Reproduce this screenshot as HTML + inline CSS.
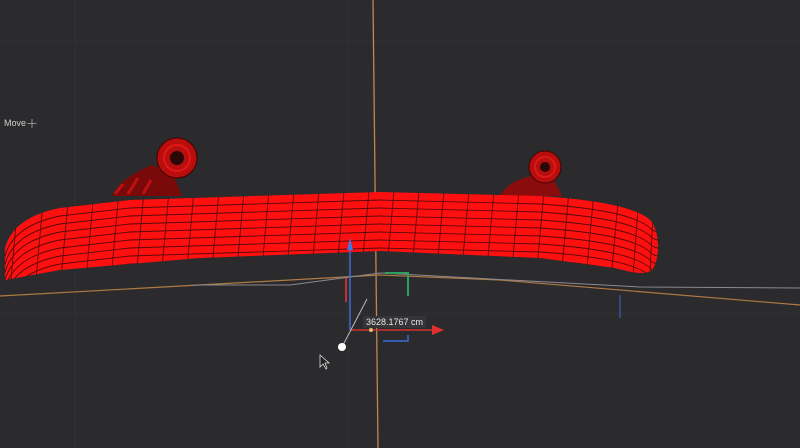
<!DOCTYPE html>
<html><head><style>
html,body{margin:0;padding:0;background:#2b2a2c;width:800px;height:448px;overflow:hidden;font-family:"Liberation Sans",sans-serif}
svg{position:absolute;left:0;top:0}
.lbl{position:absolute;left:4px;top:118px;font-size:9px;color:#cfcfcf}
.meas{position:absolute;left:363px;top:316px;font-size:9px;color:#e8e8e8;background:#353436;padding:1px 3px}
</style></head><body>
<svg width="800" height="448" viewBox="0 0 800 448">
<defs>
<clipPath id="b"><path d="M5,248 C10,230 25,215 60,208 L130,200 L380,192 L540,196 C600,200 640,208 652,222 C660,235 660,260 652,270 C645,276 630,272 615,268 L540,258 L380,251 L200,258 L60,270 L5,280 Z"/></clipPath>
<path id="row" d="M0,250 L5,248 C10,230 25,215 60,208 L130,200 L380,192 L540,196 C600,200 640,208 652,222 L700,240"/>
</defs>
<g stroke="#323133" stroke-width="1">
<line x1="75" y1="0" x2="75" y2="448"/><line x1="0" y1="42" x2="800" y2="42"/>
<line x1="348" y1="0" x2="348" y2="448"/><line x1="0" y1="314" x2="800" y2="314"/>
</g>
<line x1="373" y1="0" x2="378" y2="448" stroke="#c08850" stroke-width="1.3"/>
<!-- wheels -->
<path d="M112,196 C118,182 135,172 152,165 L172,172 L182,196 Z" fill="#7a0a0a"/>
<path d="M115,194 l8,-10 m5,10 l10,-16 m5,16 l8,-14" stroke="#c01010" stroke-width="3" fill="none"/>
<circle cx="177" cy="158" r="20" fill="#b80e0e" stroke="#400" stroke-width="1"/>
<circle cx="177" cy="158" r="13" fill="none" stroke="#e01818" stroke-width="2"/>
<circle cx="177" cy="158" r="7" fill="#2a0808"/>
<path d="M500,196 C505,185 520,178 532,176 L555,182 L562,196 Z" fill="#8a0c0c"/>
<circle cx="545" cy="167" r="16" fill="#b80e0e" stroke="#400" stroke-width="1"/>
<circle cx="545" cy="167" r="10" fill="none" stroke="#e01818" stroke-width="2"/>
<circle cx="545" cy="167" r="5" fill="#2a0808"/>
<!-- board -->
<g clip-path="url(#b)">
<rect x="0" y="180" width="700" height="110" fill="#ff1010"/>
<g fill="none" stroke="#5a0808" stroke-width="0.9">
<use href="#row" y="8"/><use href="#row" y="16"/><use href="#row" y="24"/><use href="#row" y="32"/><use href="#row" y="40"/><use href="#row" y="48"/><use href="#row" y="56"/><use href="#row" y="64"/>
<path d="M20,180 l-10,110 M45,180 l-10,110 M70,180 l-10,110 M95,180 l-10,110 M120,180 l-10,110 M145,180 l-10,110 M170,180 l-10,110 M195,180 l-10,110 M220,180 l-10,110 M245,180 l-10,110 M270,180 l-10,110 M295,180 l-10,110 M320,180 l-10,110 M345,180 l-10,110 M370,180 l-10,110 M395,180 l-10,110 M420,180 l-10,110 M445,180 l-10,110 M470,180 l-10,110 M495,180 l-10,110 M520,180 l-10,110 M545,180 l-10,110 M570,180 l-10,110 M595,180 l-10,110 M620,180 l-10,110 M640,180 l-8,110 M655,180 l-6,110"/>
</g></g>
<!-- ground lines -->
<path d="M0,296 L380,275 L500,280 L800,305" fill="none" stroke="#b07a45" stroke-width="1.2"/>
<path d="M193,285 L290,285 L380,273 L640,287 L800,288" fill="none" stroke="#8a8a90" stroke-width="1"/>
<!-- gizmo -->
<line x1="350" y1="245" x2="350" y2="330" stroke="#3a6ad8" stroke-width="1.5"/>
<path d="M347,250 L350,238 L353,250 Z" fill="#3a7ae8"/>
<line x1="346" y1="278" x2="346" y2="302" stroke="#c03030" stroke-width="2"/>
<path d="M385,273 L408,273 L408,296" fill="none" stroke="#30a060" stroke-width="2"/>
<path d="M383,341 L408,341 L408,335" fill="none" stroke="#3a6ad8" stroke-width="1.5"/>
<line x1="350" y1="330" x2="432" y2="330" stroke="#d03030" stroke-width="1.5"/>
<path d="M432,325 L444,330 L432,335 Z" fill="#e03030"/>
<circle cx="371" cy="330" r="2" fill="#e0c070"/>
<line x1="367" y1="299" x2="342" y2="347" stroke="#bbb" stroke-width="1"/>
<circle cx="342" cy="347" r="4" fill="#fff"/>
<line x1="620" y1="295" x2="620" y2="318" stroke="#3a6ad8"/>
<!-- cursor -->
<path d="M320,355 L320,367 L323,364 L326,369 L327,368 L325,363 L329,363 Z" fill="#222" stroke="#ddd" stroke-width="0.8"/>
<!-- move icon -->
<path d="M32,119 V128 M27.5,123.5 H36.5" stroke="#aaa" stroke-width="0.8"/>
</svg>
<div class="lbl">Move</div>
<div class="meas">3628.1767 cm</div>
</body></html>
